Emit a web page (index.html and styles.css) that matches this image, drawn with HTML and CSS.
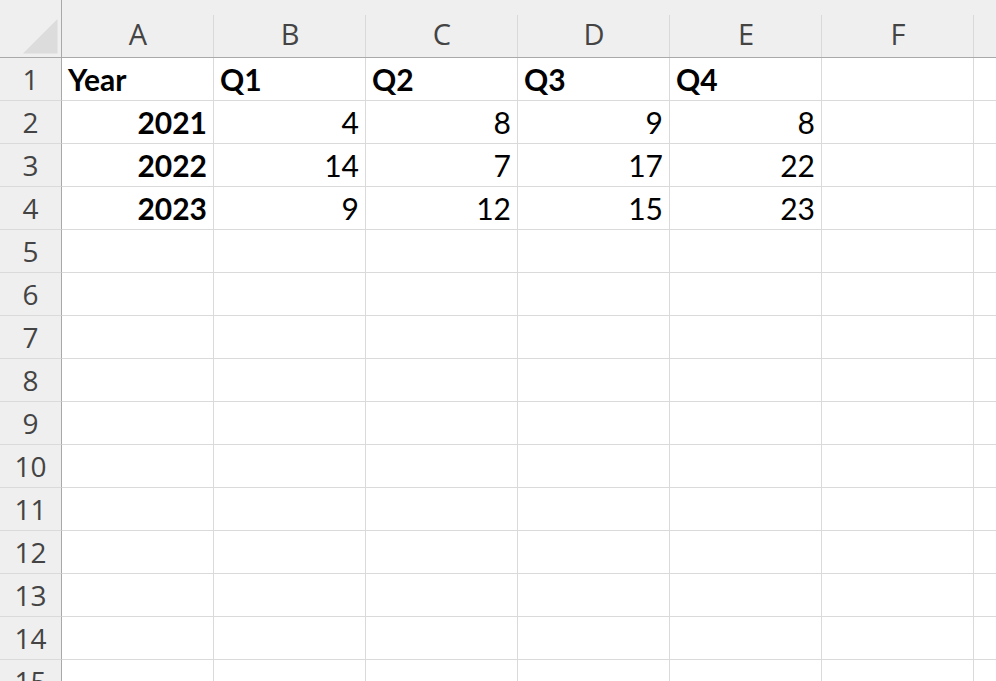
FILE: index.html
```html
<!DOCTYPE html>
<html lang="en">
<head>
    <meta charset="UTF-8">
    <meta name="viewport" content="width=device-width, initial-scale=1.0">
    <title>Sheet1</title>
    <link rel="stylesheet" href="styles.css">
</head>
<body>
    <table class="sheet">
        <colgroup>
            <col class="col-head">
            <col class="col"><col class="col"><col class="col"><col class="col">
            <col class="col"><col class="col"><col class="col">
        </colgroup>
        <thead>
            <tr class="letters">
                <th class="corner">
                    <svg width="61" height="57" viewBox="0 0 61 57"><polygon points="57.5,19 23,53.5 57.5,53.5" fill="#dcdcdc"/></svg>
                </th>
                <th>A</th><th>B</th><th>C</th><th>D</th><th>E</th><th>F</th><th></th>
            </tr>
        </thead>
        <tbody>
            <tr><th>1</th><td class="b">Year</td><td class="b">Q1</td><td class="b">Q2</td><td class="b">Q3</td><td class="b">Q4</td><td></td><td></td></tr>
            <tr><th>2</th><td class="b num">2021</td><td class="num">4</td><td class="num">8</td><td class="num">9</td><td class="num">8</td><td></td><td></td></tr>
            <tr><th>3</th><td class="b num">2022</td><td class="num">14</td><td class="num">7</td><td class="num">17</td><td class="num">22</td><td></td><td></td></tr>
            <tr><th>4</th><td class="b num">2023</td><td class="num">9</td><td class="num">12</td><td class="num">15</td><td class="num">23</td><td></td><td></td></tr>
            <tr><th>5</th><td></td><td></td><td></td><td></td><td></td><td></td><td></td></tr>
            <tr><th>6</th><td></td><td></td><td></td><td></td><td></td><td></td><td></td></tr>
            <tr><th>7</th><td></td><td></td><td></td><td></td><td></td><td></td><td></td></tr>
            <tr><th>8</th><td></td><td></td><td></td><td></td><td></td><td></td><td></td></tr>
            <tr><th>9</th><td></td><td></td><td></td><td></td><td></td><td></td><td></td></tr>
            <tr><th>10</th><td></td><td></td><td></td><td></td><td></td><td></td><td></td></tr>
            <tr><th>11</th><td></td><td></td><td></td><td></td><td></td><td></td><td></td></tr>
            <tr><th>12</th><td></td><td></td><td></td><td></td><td></td><td></td><td></td></tr>
            <tr><th>13</th><td></td><td></td><td></td><td></td><td></td><td></td><td></td></tr>
            <tr><th>14</th><td></td><td></td><td></td><td></td><td></td><td></td><td></td></tr>
            <tr><th>15</th><td></td><td></td><td></td><td></td><td></td><td></td><td></td></tr>
        </tbody>
    </table>
</body>
</html>
```

FILE: styles.css
```css
html, body {
    margin: 0;
    padding: 0;
    background: #fff;
    overflow: hidden;
}
.sheet {
    border-collapse: separate;
    border-spacing: 0;
    table-layout: fixed;
    width: 1126px;
}
.col-head {
    width: 62px;
}
.col {
    width: 152px;
}
.sheet th,
.sheet td {
    padding: 0;
    box-sizing: border-box;
    overflow: hidden;
    white-space: nowrap;
}
.sheet .letters th {
    height: 58px;
    background: linear-gradient(#d9d9d9, #d9d9d9) right bottom / 1px 42px no-repeat, #efefef;
    border-bottom: 1px solid #a9a9a9;
    font-family: "Open Sans", "Noto Sans", sans-serif;
    font-weight: normal;
    font-size: 29px;
    color: #444;
    text-align: center;
    vertical-align: bottom;
    line-height: 40px;
    padding-bottom: 3px;
}
.sheet .letters .corner {
    background: #efefef;
    border-right: 1px solid #a9a9a9;
    padding: 0;
    line-height: 0;
    vertical-align: top;
}
.sheet tbody th {
    height: 43px;
    background: #efefef;
    border-right: 1px solid #a9a9a9;
    border-bottom: 1px solid #dadada;
    font-family: "Open Sans", "Noto Sans", sans-serif;
    font-weight: normal;
    font-size: 28px;
    color: #444;
    text-align: center;
    vertical-align: bottom;
    line-height: 38px;
    padding-bottom: 2px;
}
.sheet tbody td {
    height: 43px;
    border-right: 1px solid #dadada;
    border-bottom: 1px solid #dadada;
    font-family: Lato, "Liberation Sans", sans-serif;
    font-size: 30px;
    color: #000;
    text-align: left;
    vertical-align: bottom;
    line-height: 36px;
    padding: 0 6px 3px 6px;
}
.sheet tbody td.b {
    font-weight: bold;
}
.sheet tbody td.num {
    text-align: right;
}
```
